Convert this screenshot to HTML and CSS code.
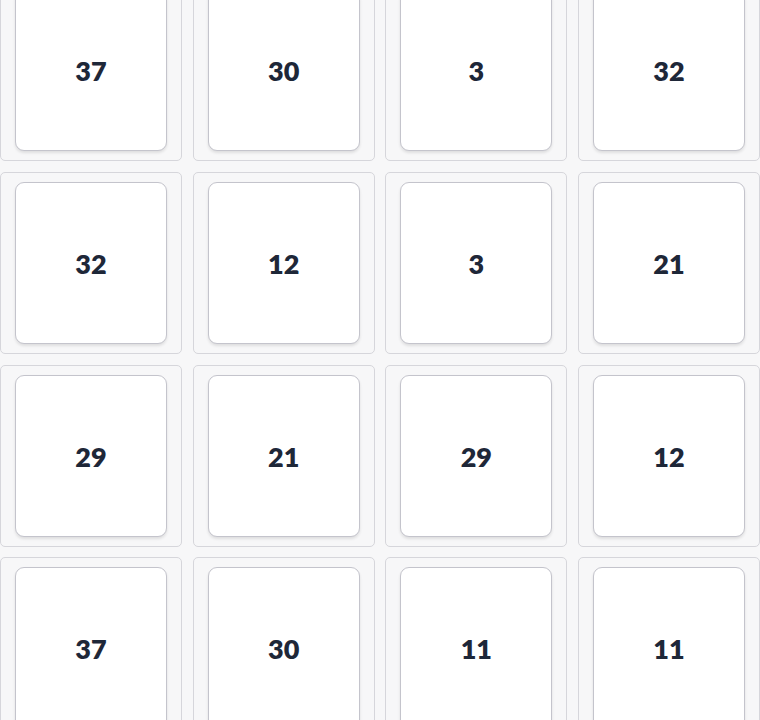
FILE: index.html
```html
<!DOCTYPE html>
<html>
<head>
<meta charset="utf-8">
<link rel="stylesheet" href="styles.css">
</head>
<body>
<div class="grid">
  <div class="cell"><div class="card">37</div></div>
  <div class="cell"><div class="card">30</div></div>
  <div class="cell"><div class="card">3</div></div>
  <div class="cell"><div class="card">32</div></div>
  <div class="cell"><div class="card">32</div></div>
  <div class="cell"><div class="card">12</div></div>
  <div class="cell"><div class="card">3</div></div>
  <div class="cell"><div class="card">21</div></div>
  <div class="cell"><div class="card">29</div></div>
  <div class="cell"><div class="card">21</div></div>
  <div class="cell"><div class="card">29</div></div>
  <div class="cell"><div class="card">12</div></div>
  <div class="cell"><div class="card">37</div></div>
  <div class="cell"><div class="card">30</div></div>
  <div class="cell"><div class="card">11</div></div>
  <div class="cell"><div class="card">11</div></div>
</div>
</body>
</html>
```
FILE: styles.css
```css
html, body {
  margin: 0;
  padding: 0;
  background: #f7f7f8;
  overflow: hidden;
}
.grid {
  display: grid;
  grid-template-columns: repeat(4, 182px);
  justify-content: space-between;
  row-gap: 10.67px;
  width: 760px;
  margin-top: -20.67px;
}
.cell {
  box-sizing: border-box;
  height: 182px;
  border: 1px solid #d6d6db;
  border-radius: 5px;
  background: #f7f7f8;
  padding: 9px 14px;
  display: flex;
}
.card {
  flex: 1;
  box-sizing: border-box;
  background: #ffffff;
  border: 1px solid #c4c4cc;
  border-radius: 9px;
  box-shadow: 0 2px 3px rgba(0, 0, 0, 0.10);
  display: flex;
  align-items: center;
  justify-content: center;
  font-family: "Lato", "Open Sans", sans-serif;
  font-weight: 800;
  font-size: 27px;
  color: #1e2738;
  padding-top: 1px;
}
```
